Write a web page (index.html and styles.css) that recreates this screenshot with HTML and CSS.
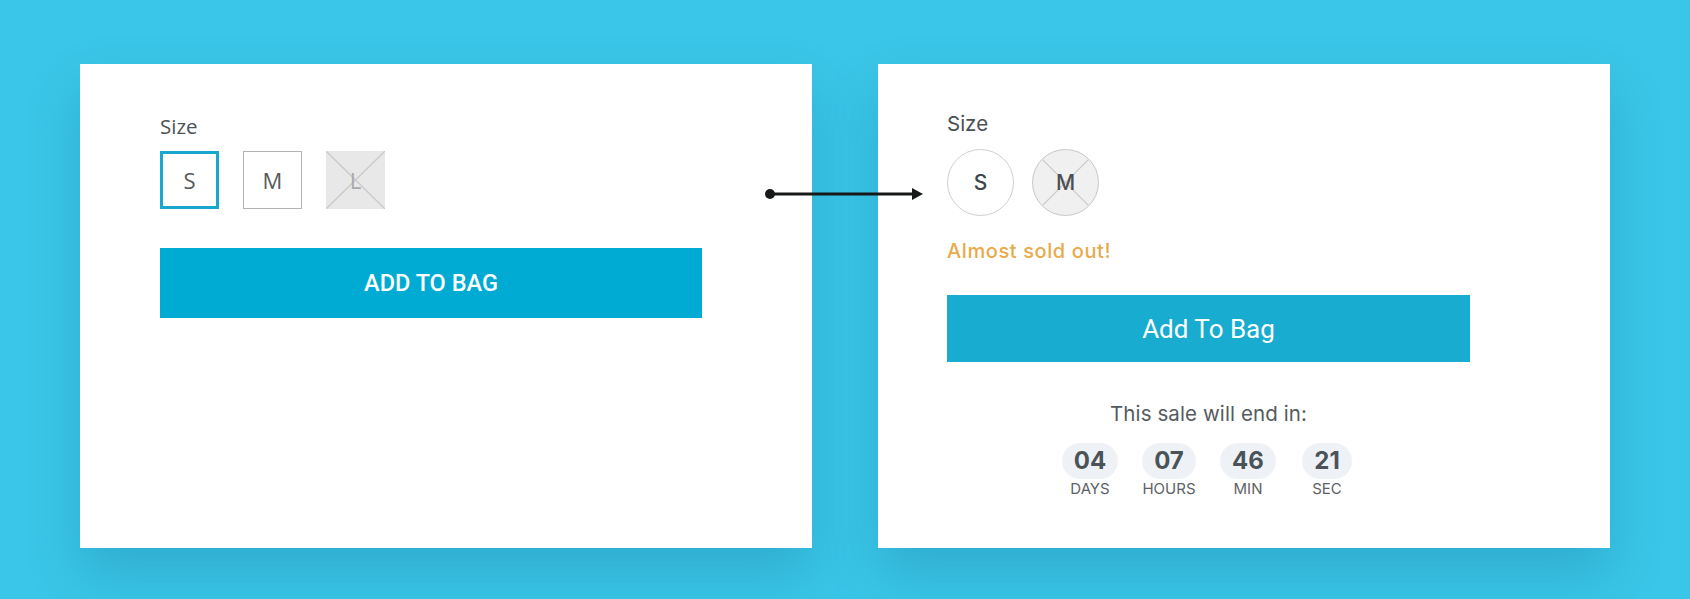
FILE: index.html
```html
<!DOCTYPE html>
<html lang="en">
<head>
<meta charset="utf-8">
<title>Size selector comparison</title>
<link rel="stylesheet" href="styles.css">
</head>
<body>
<main class="stage">
  <section class="card card-old">
    <div class="label-old">Size</div>
    <div class="sizes-old">
      <button class="sq sq-active">S</button>
      <button class="sq">M</button>
      <button class="sq sq-out">
        <svg class="cross" viewBox="0 0 59 58" preserveAspectRatio="none"><line x1="0" y1="0" x2="59" y2="58"/><line x1="59" y1="0" x2="0" y2="58"/></svg>
        <span>L</span>
      </button>
    </div>
    <button class="bag-old">ADD TO BAG</button>
  </section>

  <section class="card card-new">
    <div class="col-new">
      <div class="label-new">Size</div>
      <div class="sizes-new">
        <button class="circ">S</button>
        <button class="circ circ-out">
          <svg class="cross" viewBox="0 0 66 66"><line x1="10" y1="10" x2="56" y2="56"/><line x1="56" y1="10" x2="10" y2="56"/></svg>
          <span>M</span>
        </button>
      </div>
      <div class="warn">Almost sold out!</div>
      <button class="bag-new">Add To Bag</button>
      <div class="sale">This sale will end in:</div>
      <div class="timer">
        <div class="unit"><span class="num">04</span><span class="lbl">DAYS</span></div>
        <div class="unit"><span class="num">07</span><span class="lbl">HOURS</span></div>
        <div class="unit"><span class="num">46</span><span class="lbl">MIN</span></div>
        <div class="unit"><span class="num">21</span><span class="lbl">SEC</span></div>
      </div>
    </div>
  </section>
</main>
<svg class="arrow" viewBox="0 0 170 22" width="170" height="22">
  <circle cx="10" cy="11" r="5" fill="#161819"/>
  <line x1="10" y1="11" x2="154" y2="11" stroke="#161819" stroke-width="3"/>
  <polygon points="152,5 163,11 152,17" fill="#161819"/>
</svg>
</body>
</html>
```

FILE: styles.css
```css
* { box-sizing: border-box; }
html, body { margin: 0; padding: 0; }
body {
  width: 1690px;
  height: 599px;
  overflow: hidden;
  position: relative;
  background: #3ac6e8;
  font-family: "Open Sans", "Liberation Sans", sans-serif;
}
button {
  font: inherit;
  margin: 0;
  padding: 0;
  border: 0;
  background: none;
}
.stage {
  display: flex;
  gap: 66px;
  padding: 64px 0 0 80px;
}
.card {
  width: 732px;
  height: 484px;
  background: #ffffff;
  box-shadow: 0 26px 50px rgba(10, 85, 125, 0.22);
}

/* old card */
.card-old {
  padding: 50px 0 0 80px;
}
.label-old {
  font-size: 20.5px;
  line-height: 25px;
  color: #4d5256;
}
.sizes-old {
  display: flex;
  gap: 24px;
  margin-top: 12px;
}
.sq {
  position: relative;
  width: 59px;
  height: 58px;
  border: 1px solid #b3b3b3;
  font-family: "Open Sans", sans-serif;
  font-size: 22px;
  font-weight: 400;
  color: #58595b;
  display: flex;
  align-items: center;
  justify-content: center;
}
.sq-active {
  border: 3px solid #18a7cd;
}
.sq-out {
  border: 0;
  background: #e8e8e8;
  color: #a9a9a9;
}
.sq-out span, .circ-out span { position: relative; }
.cross {
  position: absolute;
  left: 0;
  top: 0;
  width: 100%;
  height: 100%;
}
.sq-out .cross line {
  stroke: #c9c9c9;
  stroke-width: 1.3;
}
.bag-old {
  display: block;
  margin-top: 39px;
  width: 542px;
  height: 70px;
  background: #00abd3;
  color: #ffffff;
  font-family: Roboto, sans-serif;
  font-weight: 500;
  font-size: 23.5px;
  text-align: center;
}

/* new card */
.card-new {
  padding: 48px 0 0 69px;
}
.col-new {
  width: 523px;
  font-family: Inter, "Noto Sans", sans-serif;
}
.label-new {
  font-size: 20.5px;
  line-height: 24px;
  color: #4a5054;
}
.sizes-new {
  display: flex;
  gap: 18px;
  margin-top: 13px;
}
.circ {
  position: relative;
  width: 67px;
  height: 67px;
  border-radius: 50%;
  border: 1.5px solid #d0d0d0;
  display: flex;
  align-items: center;
  justify-content: center;
  font-family: Inter, sans-serif;
  font-size: 21px;
  font-weight: 500;
  color: #3e464b;
}
.circ-out {
  background: #f0f0f0;
  border-color: #c8c8c8;
  color: #4a5054;
}
.circ-out .cross line {
  stroke: #c9c9c9;
  stroke-width: 1.3;
}
.warn {
  margin-top: 23px;
  font-size: 20px;
  line-height: 24px;
  font-weight: 500;
  letter-spacing: 0.6px;
  color: #e9aa4c;
}
.bag-new {
  display: block;
  margin-top: 32px;
  width: 523px;
  height: 67px;
  background: #17acd0;
  color: #ffffff;
  font-family: Roboto, sans-serif;
  font-weight: 400;
  font-size: 26px;
  text-align: center;
}
.sale {
  margin-top: 40px;
  text-align: center;
  font-size: 20.5px;
  line-height: 24px;
  letter-spacing: 0.1px;
  color: #545b60;
}
.timer {
  display: flex;
  justify-content: center;
  margin-top: 17px;
}
.unit {
  width: 79px;
  display: flex;
  flex-direction: column;
  align-items: center;
}
.num {
  height: 36px;
  padding: 0 12px;
  border-radius: 18px;
  background: #eef2f7;
  font-size: 24px;
  line-height: 36px;
  font-weight: 700;
  color: #4b5358;
}
.lbl {
  margin-top: 1px;
  font-size: 15px;
  line-height: 18px;
  color: #5d6266;
}

/* connector arrow overlays both cards */
.arrow {
  position: absolute;
  left: 760px;
  top: 183px;
}
```
